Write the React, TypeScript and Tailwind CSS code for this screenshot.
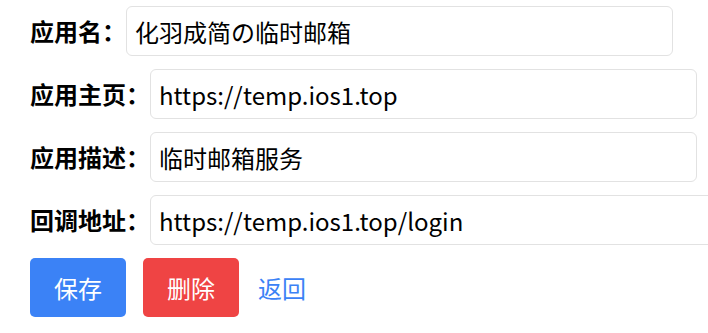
import { useState } from "react";

const FONT = { fontFamily: '"Noto Sans CJK SC", "Noto Sans", sans-serif' };

interface Field {
  key: string;
  label: string;
  value: string;
  width: string;
}

const FIELDS: Field[] = [
  { key: "name", label: "应用名：", value: "化羽成简の临时邮箱", width: "w-[547px]" },
  { key: "home", label: "应用主页：", value: "https://temp.ios1.top", width: "w-[547px]" },
  { key: "desc", label: "应用描述：", value: "临时邮箱服务", width: "w-[547px]" },
  { key: "callback", label: "回调地址：", value: "https://temp.ios1.top/login", width: "w-[640px]" },
];

export default function App() {
  const [values, setValues] = useState<Record<string, string>>(
    Object.fromEntries(FIELDS.map((f) => [f.key, f.value]))
  );

  return (
    <div
      className="w-[708px] h-[333px] overflow-hidden bg-white pl-[30px] pt-[6px] text-[24px] text-black"
      style={FONT}
    >
      <div className="flex flex-col gap-[13px]">
        {FIELDS.map((f) => (
          <div key={f.key} className="flex items-center whitespace-nowrap">
            <label className="font-bold leading-8 shrink-0">{f.label}</label>
            <input
              type="text"
              value={values[f.key]}
              onChange={(e) => setValues({ ...values, [f.key]: e.target.value })}
              className={`${f.width} shrink-0 h-[50px] border border-[#e2e2e2] rounded-md px-2 leading-8 text-black outline-none`}
            />
          </div>
        ))}

        {/* actions */}
        <div className="flex items-center">
          <button className="h-[59px] px-6 bg-[#3b82f6] text-white rounded-[5px] leading-9">
            保存
          </button>
          <button className="ml-[17px] h-[59px] px-6 bg-[#ef4444] text-white rounded-[5px] leading-9">
            删除
          </button>
          <a href="#" className="ml-[19px] text-[#3b82f6] leading-9">
            返回
          </a>
        </div>
      </div>
    </div>
  );
}
